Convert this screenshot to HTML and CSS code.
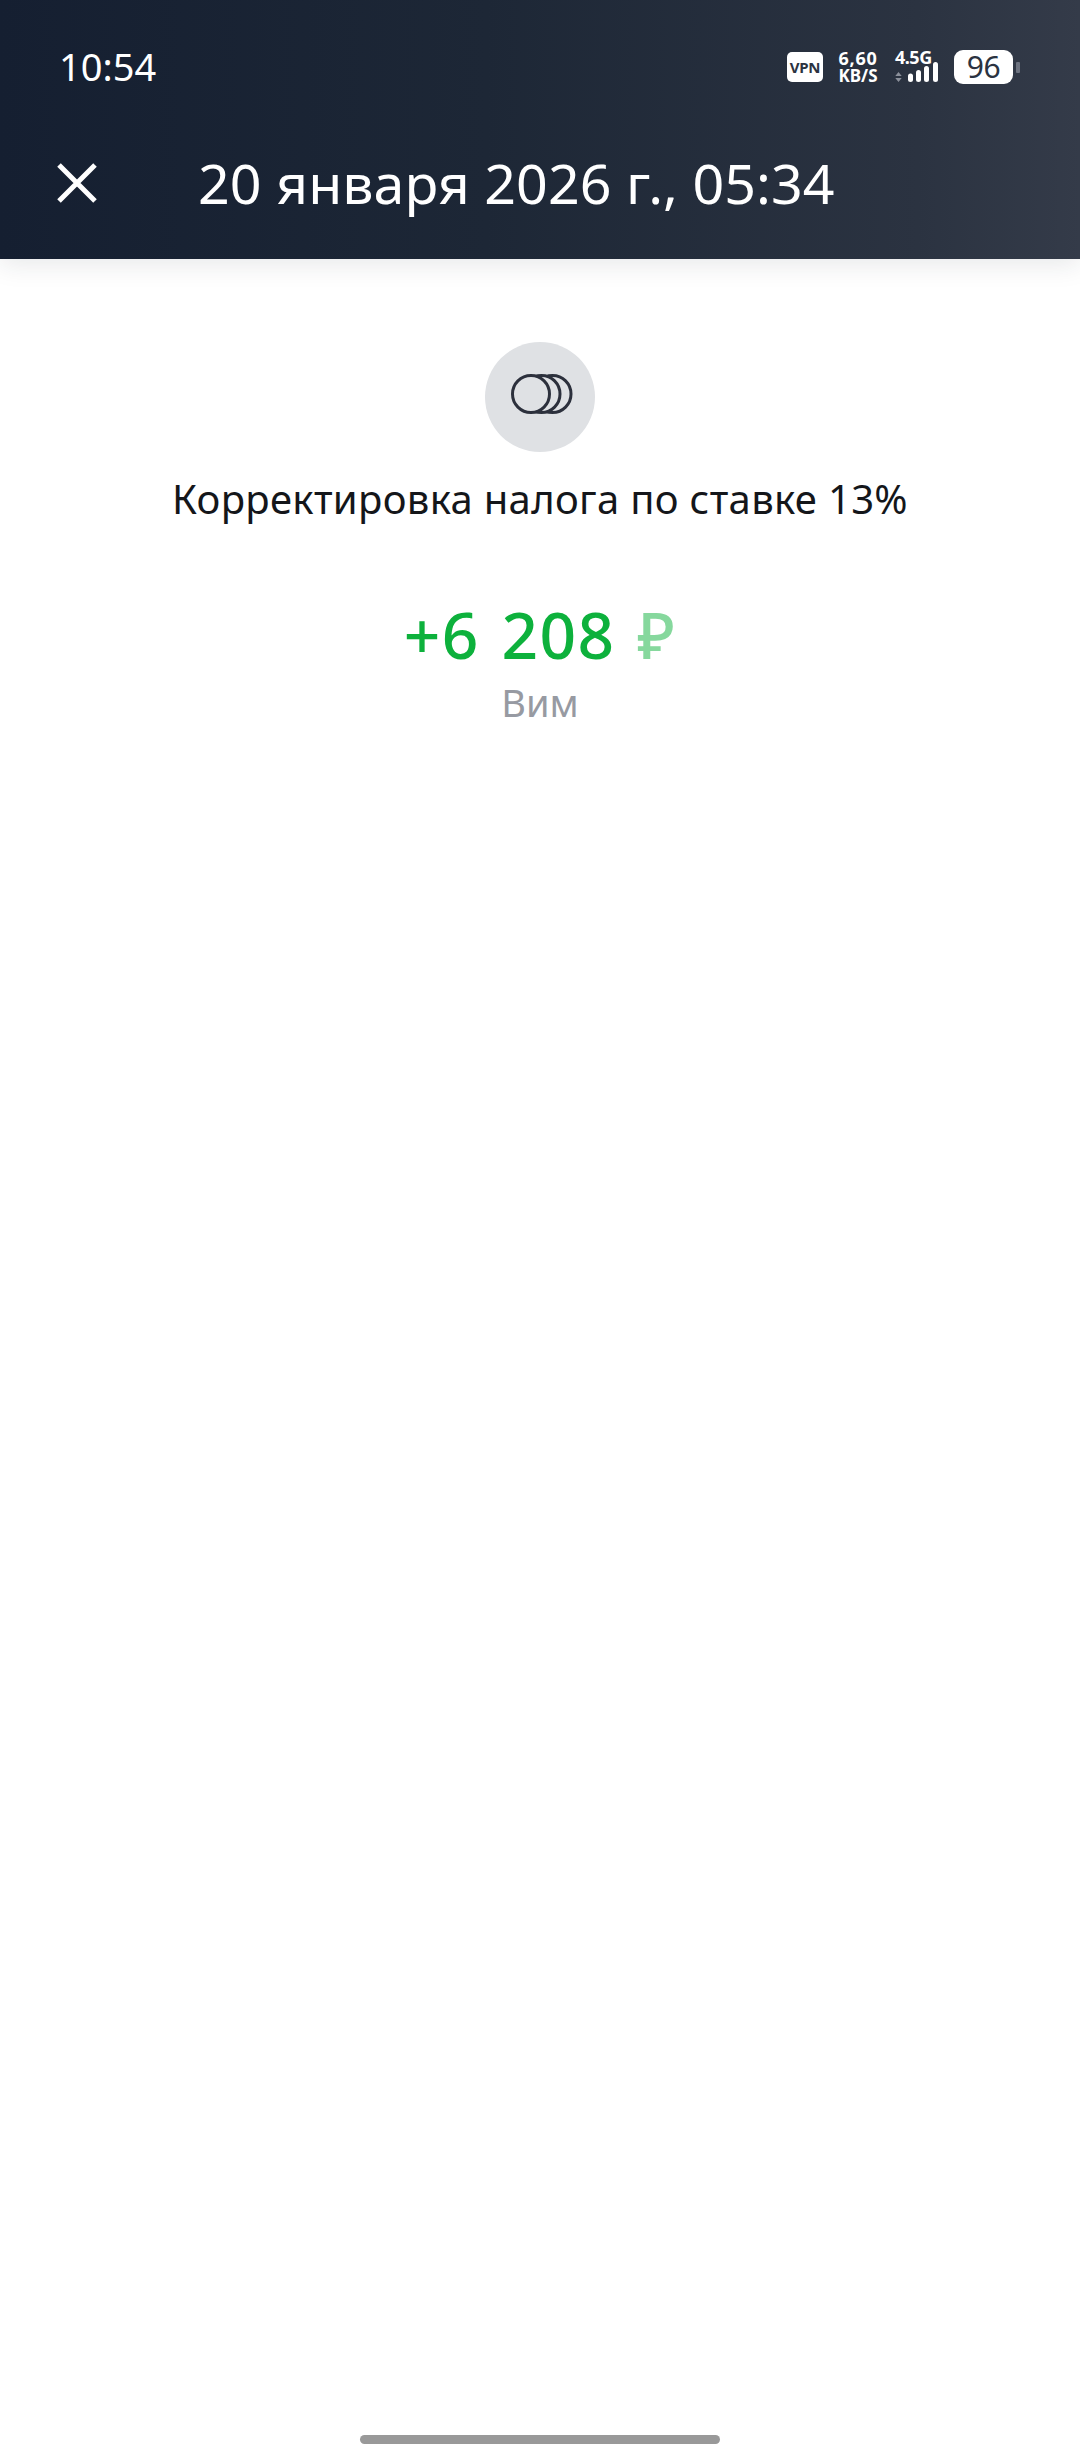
FILE: index.html
```html
<!DOCTYPE html>
<html lang="ru">
<head>
    <meta charset="UTF-8">
    <title>Операция</title>
    <link rel="stylesheet" href="styles.css">
</head>
<body>
    <div class="screen">
        <header class="header">
            <div class="status-bar">
                <span class="clock">10:54</span>
                <div class="status-icons">
                    <span class="vpn">VPN</span>
                    <span class="speed"><b>6,60</b><b class="speed-unit">KB/S</b></span>
                    <span class="network">
                        <b class="network-type">4.5G</b>
                        <svg class="signal" width="44" height="20" viewBox="0 0 44 20">
                            <path d="M3.5 10l3.2 4H.3z M3.5 20l3.2-4H.3z" fill="#8b909a"/>
                            <rect x="13" y="11.500" width="5" height="8.500" rx="2.500" fill="#fff"/>
                            <rect x="21" y="8" width="5" height="12" rx="2.500" fill="#fff"/>
                            <rect x="29" y="4" width="5" height="16" rx="2.500" fill="#fff"/>
                            <rect x="38" y="0" width="5" height="20" rx="2.500" fill="#fff"/>
                        </svg>
                    </span>
                    <span class="battery">96</span>
                    <span class="battery-nub"></span>
                </div>
            </div>
            <div class="title-bar">
                <svg class="close" width="40" height="40" viewBox="0 0 40 40">
                    <path d="M2 2l36 36M38 2L2 38" stroke="#fff" stroke-width="5" fill="none"/>
                </svg>
                <h1 class="title">20 января 2026 г., 05:34</h1>
            </div>
        </header>

        <main class="content">
            <div class="op-icon">
                <svg class="coins" width="62" height="42" viewBox="0 0 62 42">
                    <circle cx="41.500" cy="21" r="18.500"/>
                    <circle cx="30.500" cy="21" r="18.500"/>
                    <circle cx="20" cy="21" r="18.500"/>
                </svg>
            </div>
            <p class="op-name">Корректировка налога по ставке 13%</p>
            <p class="amount">+6 208 <span class="currency">₽</span></p>
            <p class="merchant">Вим</p>
        </main>

        <div class="home-indicator"></div>
    </div>
</body>
</html>
```

FILE: styles.css
```css
* {
    box-sizing: border-box;
}
html, body {
    margin: 0;
    padding: 0;
}
body {
    background-color: #fff;
    font-family: "Noto Sans", "Open Sans", sans-serif;
}
.screen {
    width: 1080px;
    height: 2460px;
    display: flex;
    flex-direction: column;
    overflow: hidden;
}
.header {
    height: 259px;
    background: linear-gradient(90deg, #151f31 0%, #1d2736 45%, #2b3341 85%, #343b49 100%);
    box-shadow: 0 6px 24px rgba(30, 35, 50, 0.1);
    color: #fff;
    flex-shrink: 0;
}
.status-bar {
    height: 136px;
    padding: 43px 60px 0 59px;
    display: flex;
    justify-content: space-between;
    align-items: flex-start;
}
.clock {
    font-size: 38px;
    line-height: 46px;
}
.status-icons {
    display: flex;
    align-items: center;
    height: 48px;
}
.vpn {
    width: 36px;
    height: 30px;
    background-color: #fff;
    border-radius: 5px;
    color: #2b3341;
    font-size: 15px;
    font-weight: 700;
    line-height: 30px;
    text-align: center;
    letter-spacing: -0.3px;
}
.speed {
    display: flex;
    flex-direction: column;
    align-items: center;
    width: 40px;
    margin-left: 15px;
    font-size: 18px;
    line-height: 18px;
    letter-spacing: 0.8px;
}
.speed-unit {
    font-size: 17px;
    letter-spacing: 0;
}
.network {
    width: 44px;
    height: 34px;
    margin-left: 17px;
    position: relative;
}
.network-type {
    display: block;
    font-size: 18px;
    line-height: 14px;
    letter-spacing: -0.5px;
}
.signal {
    position: absolute;
    left: 0;
    bottom: 2px;
}
.battery {
    width: 59px;
    height: 34px;
    margin-left: 15px;
    background-color: #fff;
    border-radius: 9px;
    color: #2b3341;
    font-size: 30px;
    line-height: 34px;
    letter-spacing: -0.5px;
    text-align: center;
}
.battery-nub {
    width: 4px;
    height: 11px;
    margin-left: 3px;
    background-color: #6d7380;
    border-radius: 1px;
}
.title-bar {
    display: flex;
    align-items: center;
    height: 92px;
    padding-left: 57px;
}
.close {
    flex-shrink: 0;
    margin-top: 2px;
}
.title {
    margin: 0 0 0 101px;
    font-size: 55.500px;
    font-weight: 400;
    letter-spacing: 0.05px;
    white-space: nowrap;
}
.content {
    flex: 1;
    display: flex;
    flex-direction: column;
    align-items: center;
    padding-top: 83px;
}
.op-icon {
    width: 110px;
    height: 110px;
    border-radius: 50%;
    background-color: #dfe1e4;
    display: flex;
    align-items: center;
    justify-content: center;
}
.coins {
    margin: 0 0 6px 4px;
}
.coins circle {
    fill: #dfe1e4;
    stroke: #2c303c;
    stroke-width: 3;
}
.op-name {
    margin: 22px 0 0;
    font-size: 40px;
    line-height: 50px;
    letter-spacing: 0.33px;
    color: #14161a;
}
.amount {
    margin: 71px 0 0;
    font-size: 64px;
    font-weight: 500;
    line-height: 80px;
    letter-spacing: 1.3px;
    word-spacing: 4px;
    color: #0db13c;
}
.currency {
    color: #86d89d;
}
.merchant {
    margin: 2px 0 0;
    font-size: 38px;
    line-height: 50px;
    color: #979aa2;
}
.home-indicator {
    width: 360px;
    height: 9px;
    margin: 0 auto 16px;
    background-color: #999;
    border-radius: 5px;
    flex-shrink: 0;
}
```
